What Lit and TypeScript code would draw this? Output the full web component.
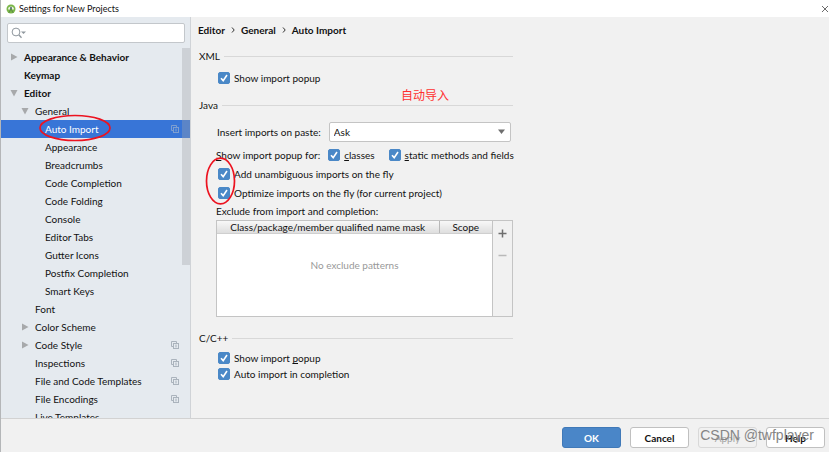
import { LitElement, html, css, svg, nothing } from "lit";
import { customElement, property, state } from "lit/decorators.js";
import { classMap } from "lit/directives/class-map.js";

interface TreeItem {
  label: string;
  level: number;
  arrow?: "open" | "closed";
  copy?: boolean;
}

const ITEMS: TreeItem[] = [
  { label: "Appearance & Behavior", level: 0, arrow: "closed" },
  { label: "Keymap", level: 0 },
  { label: "Editor", level: 0, arrow: "open" },
  { label: "General", level: 1, arrow: "open" },
  { label: "Auto Import", level: 2, copy: true },
  { label: "Appearance", level: 2 },
  { label: "Breadcrumbs", level: 2 },
  { label: "Code Completion", level: 2 },
  { label: "Code Folding", level: 2 },
  { label: "Console", level: 2 },
  { label: "Editor Tabs", level: 2 },
  { label: "Gutter Icons", level: 2 },
  { label: "Postfix Completion", level: 2 },
  { label: "Smart Keys", level: 2 },
  { label: "Font", level: 1 },
  { label: "Color Scheme", level: 1, arrow: "closed" },
  { label: "Code Style", level: 1, arrow: "closed", copy: true },
  { label: "Inspections", level: 1, copy: true },
  { label: "File and Code Templates", level: 1, copy: true },
  { label: "File Encodings", level: 1, copy: true },
  { label: "Live Templates", level: 1 },
];

const base = css`
  * {
    box-sizing: border-box;
  }
  button,
  input,
  select {
    font: inherit;
    color: inherit;
    margin: 0;
  }
`;

@customElement("settings-tree")
export class SettingsTree extends LitElement {
  @state() private selected = "Auto Import";

  static styles = [
    base,
    css`
      :host {
        display: flex;
        flex-direction: column;
        min-height: 0;
        background: #e5eaef;
        border-right: 1px solid #d0d3d7;
      }
      .search {
        display: flex;
        align-items: center;
        gap: 2px;
        height: 20px;
        margin: 6px 5px 5px 6px;
        padding: 0 3px;
        flex: none;
        background: #fff;
        border: 1px solid #c3c7cb;
        border-radius: 2px;
      }
      .search input {
        flex: 1;
        min-width: 0;
        border: 0;
        outline: 0;
        background: none;
      }
      .scroll {
        position: relative;
        flex: 1;
        min-height: 0;
        overflow: hidden;
      }
      .thumb {
        position: absolute;
        top: 0;
        right: 0;
        width: 8px;
        height: 217px;
        background: #a0a4a859;
      }
      ul {
        list-style: none;
        margin: 0;
        padding: 0;
      }
      .row {
        position: relative;
        display: flex;
        align-items: center;
        gap: 4px;
        width: 100%;
        height: 18px;
        padding: 0 11px 0 8px;
        border: 0;
        background: none;
        text-align: left;
      }
      .row.l0 {
        font-weight: 700;
      }
      .row.l1 {
        padding-left: 19px;
      }
      .row.l2 {
        padding-left: 29px;
      }
      .row.sel {
        background: #3875d7;
        color: #fff;
      }
      .arrow {
        width: 11px;
        height: 10px;
        flex: none;
      }
      .label {
        flex: 1;
        white-space: nowrap;
      }
      .copy {
        width: 8px;
        height: 8px;
        color: #aab3bc;
      }
      .sel .copy {
        color: #7f9fd0;
      }
      .ring {
        position: absolute;
        left: 38px;
        top: -6px;
        width: 72px;
        height: 28px;
        z-index: 1;
      }
    `,
  ];

  private arrow(kind?: string) {
    return html`<svg class="arrow" viewBox="0 0 11 10">
      ${kind === "closed"
        ? svg`<path d="M2 1.5V8.5L8.5 5Z" fill="#a7a9ab" />`
        : kind === "open"
          ? svg`<path d="M1.5 2H8.5L5 8.5Z" fill="#a7a9ab" />`
          : nothing}
    </svg>`;
  }

  render() {
    return html`
      <div class="search">
        <svg width="16" height="14" viewBox="0 0 16 14" fill="none" stroke="#8f979e">
          <circle cx="5" cy="6" r="3.9" />
          <path d="M8 9L10.5 11.8" stroke-width="1.3" />
          <path d="M10 5.5H15L12.5 8Z" fill="#8f979e" stroke="none" />
        </svg>
        <input type="text" aria-label="Search settings" />
      </div>
      <div class="scroll">
        <ul>
          ${ITEMS.map((item) => {
            const sel = item.label === this.selected;
            return html`<li>
              <button
                class=${classMap({ row: true, ["l" + item.level]: true, sel })}
                @click=${() => (this.selected = item.label)}
              >
                ${this.arrow(item.arrow)}
                <span class="label">${item.label}</span>
                ${item.copy
                  ? html`<svg class="copy" viewBox="0 0 8 8" fill="none" stroke="currentColor">
                      <path d="M2.5 5.5H.5V.5H5.5V2" />
                      <rect x="2.5" y="2.5" width="5" height="5" />
                      <path d="M4 4.2H6M4 5.8H6" stroke-width=".8" />
                    </svg>`
                  : nothing}
                ${item.label === "Auto Import"
                  ? html`<svg class="ring" viewBox="0 0 72 28" fill="none">
                      <ellipse cx="36" cy="14" rx="35" ry="12.5" stroke="#ec1320" stroke-width="1.7" />
                    </svg>`
                  : nothing}
              </button>
            </li>`;
          })}
        </ul>
        <div class="thumb"></div>
      </div>
    `;
  }
}

@customElement("check-option")
export class CheckOption extends LitElement {
  @property() label = "";
  @property() mnemonic = "";

  static styles = [
    base,
    css`
      :host {
        display: flex;
        align-items: center;
      }
      label {
        display: flex;
        align-items: center;
        gap: 4px;
        white-space: nowrap;
      }
      .box {
        display: grid;
        flex: none;
        width: 12px;
        height: 12px;
      }
      .box > * {
        grid-area: 1 / 1;
      }
      input {
        appearance: none;
        width: 12px;
        height: 12px;
        border: 1px solid #b0b0b0;
        border-radius: 2px;
        background: #fff;
      }
      input:checked {
        background: #4a88c7;
        border-color: #4a88c7;
      }
      svg {
        pointer-events: none;
      }
      u {
        text-underline-offset: 1px;
        text-decoration-skip-ink: none;
      }
    `,
  ];

  render() {
    const i = this.mnemonic ? this.label.lastIndexOf(this.mnemonic) : -1;
    const at = this.mnemonic.length > 1 ? i : this.label.indexOf(this.mnemonic);
    const text =
      i < 0
        ? this.label
        : html`${this.label.slice(0, at)}<u>${this.label[at]}</u>${this.label.slice(at + 1)}`;
    return html`<label>
      <span class="box">
        <input type="checkbox" checked />
        <svg width="12" height="12" viewBox="0 0 12 12" fill="none">
          <path d="M3 6.2L5.2 8.6L9 3" stroke="#fff" stroke-width="1.6" />
        </svg>
      </span>
      <span>${text}</span>
    </label>`;
  }
}

@customElement("auto-import-page")
export class AutoImportPage extends LitElement {
  static styles = [
    base,
    css`
      :host {
        display: block;
        min-width: 0;
        padding: 4px 6px;
        overflow: hidden;
      }
      .crumbs {
        display: flex;
        align-items: center;
        gap: 6px;
        height: 18px;
        margin: 0 0 9px 1px;
        font-weight: 700;
      }
      .crumbs svg {
        width: 4px;
        height: 6px;
      }
      section {
        position: relative;
        width: 314px;
        max-width: 100%;
        margin-left: 2px;
      }
      h2 {
        display: flex;
        align-items: center;
        gap: 4px;
        height: 16px;
        margin: 0;
        font-size: 10px;
        font-weight: 400;
      }
      h2::after {
        content: "";
        flex: 1;
        height: 1px;
        background: #d8d8d8;
      }
      .body {
        padding: 4px 0 10px 19px;
      }
      .body.java {
        padding: 9px 0 13px 17px;
      }
      .body check-option {
        height: 19px;
      }
      .body.tight check-option {
        height: 16px;
      }
      .field {
        display: flex;
        align-items: center;
        gap: 8px;
        height: 20px;
        margin: 0 2px 4px 1px;
        white-space: nowrap;
      }
      .pick {
        position: relative;
        flex: 1;
        display: flex;
        height: 20px;
      }
      .pick select {
        appearance: none;
        width: 100%;
        padding: 0 4px;
        background: #fff;
        border: 1px solid #c4c4c4;
        border-radius: 2px;
      }
      .pick svg {
        position: absolute;
        right: 6px;
        top: 7px;
        pointer-events: none;
      }
      .line {
        display: flex;
        align-items: center;
        gap: 8px;
        height: 18px;
        margin: 0;
        white-space: nowrap;
      }
      .line u {
        text-underline-offset: 1px;
      }
      .line check-option + check-option {
        margin-left: 6px;
      }
      .pair {
        position: relative;
        padding-left: 2px;
      }
      .ring {
        position: absolute;
        left: -11px;
        top: -7px;
        width: 31px;
        height: 48px;
      }
      .list {
        display: flex;
        height: 97px;
        border: 1px solid #c4c4c4;
      }
      .grid {
        flex: 1;
        display: flex;
        flex-direction: column;
        background: #fff;
        border-right: 1px solid #c4c4c4;
      }
      table {
        width: 100%;
        border-collapse: collapse;
      }
      th {
        height: 12px;
        padding: 0;
        line-height: 12px;
        font-weight: 400;
        background: linear-gradient(#f8f8f8, #dedede);
        border-bottom: 1px solid #cfcfcf;
      }
      th + th {
        width: 53px;
        border-left: 1px solid #b8b8b8;
      }
      .empty {
        margin: 24px 0 0;
        line-height: 14px;
        text-align: center;
        color: #999;
      }
      .tools {
        display: flex;
        flex-direction: column;
        align-items: center;
        gap: 10px;
        width: 19px;
        padding-top: 6px;
      }
      .tools button {
        display: grid;
        place-items: center;
        width: 12px;
        height: 12px;
        padding: 0;
        border: 0;
        background: none;
      }
      .note {
        position: absolute;
        left: 202px;
        top: -10px;
        margin: 0;
        font-size: 12px;
        line-height: 18px;
        color: #ff3030;
        z-index: 1;
        white-space: nowrap;
      }
    `,
  ];

  render() {
    const sep = html`<svg viewBox="0 0 4 6" fill="none"><path d="M1 .5L3.2 3L1 5.5" stroke="#333" /></svg>`;
    return html`
      <nav class="crumbs" aria-label="Breadcrumb">
        <span>Editor</span>${sep}<span>General</span>${sep}<span>Auto Import</span>
      </nav>
      <section>
        <h2>XML</h2>
        <div class="body"><check-option label="Show import popup"></check-option></div>
      </section>
      <section>
        <h2>Java</h2>
        <p class="note" lang="zh">自动导入</p>
        <div class="body java">
          <div class="field">
            <label for="paste">Insert imports on paste:</label>
            <span class="pick">
              <select id="paste">
                <option>Ask</option>
                <option>All</option>
                <option>None</option>
              </select>
              <svg width="7" height="6" viewBox="0 0 7 6"><path d="M0 .5H7L3.5 5Z" fill="#6e6e6e" /></svg>
            </span>
          </div>
          <div class="line">
            <span><u>S</u>how import popup for:</span>
            <check-option label="classes" mnemonic="c"></check-option>
            <check-option label="static methods and fields" mnemonic="s"></check-option>
          </div>
          <div class="pair">
            <check-option label="Add unambiguous imports on the fly"></check-option>
            <check-option label="Optimize imports on the fly (for current project)"></check-option>
            <svg class="ring" viewBox="0 0 31 48" fill="none">
              <ellipse cx="15.5" cy="24" rx="14" ry="22.8" stroke="#ec1320" stroke-width="1.7" />
            </svg>
          </div>
          <p class="line">Exclude from import and completion:</p>
          <div class="list">
            <div class="grid">
              <table>
                <thead>
                  <tr>
                    <th>Class/package/member qualified name mask</th>
                    <th>Scope</th>
                  </tr>
                </thead>
              </table>
              <p class="empty">No exclude patterns</p>
            </div>
            <div class="tools">
              <button aria-label="Add">
                <svg width="9" height="9" viewBox="0 0 9 9"><path d="M4.5 .5V8.5M.5 4.5H8.5" stroke="#6e6e6e" stroke-width="1.5" /></svg>
              </button>
              <button aria-label="Remove" disabled>
                <svg width="9" height="9" viewBox="0 0 9 9"><path d="M.5 4.5H8.5" stroke="#b9b9b9" stroke-width="1.5" /></svg>
              </button>
            </div>
          </div>
        </div>
      </section>
      <section>
        <h2>C/C++</h2>
        <div class="body tight">
          <check-option label="Show import popup" mnemonic="popup"></check-option>
          <check-option label="Auto import in completion"></check-option>
        </div>
      </section>
    `;
  }
}

@customElement("app-root")
export class AppRoot extends LitElement {
  static styles = [
    base,
    css`
      :host {
        display: flex;
        flex-direction: column;
        height: 100vh;
        box-sizing: border-box;
        border-left: 1px solid #b4b6b8;
        background: #f1f1f1;
        color: #111;
        font-family: Lato, "Noto Sans CJK SC", sans-serif;
        font-size: 10px;
        line-height: 14px;
        overflow: hidden;
      }
      header {
        display: flex;
        align-items: center;
        gap: 3px;
        height: 17px;
        flex: none;
        padding: 0 0 0 5px;
        background: #fff;
        font-size: 9px;
      }
      header span {
        flex: 1;
      }
      .close {
        display: grid;
        place-items: center;
        width: 8px;
        height: 16px;
        padding: 0;
        border: 0;
        background: none;
      }
      main {
        flex: 1;
        min-height: 0;
        display: grid;
        grid-template-columns: 190px 1fr;
      }
      footer {
        position: relative;
        display: flex;
        justify-content: flex-end;
        gap: 9px;
        flex: none;
        height: 34px;
        padding: 8px 4px 0 0;
        border-top: 1px solid #d2d2d2;
      }
      .btn {
        width: 59px;
        height: 21px;
        padding: 0;
        background: #fff;
        border: 1px solid #c0c0c0;
        border-radius: 3px;
        font-weight: 700;
      }
      .btn.ok {
        background: #4a86c8;
        border-color: #4079b8;
        color: #fff;
      }
      .btn:disabled {
        background: #f1f1f1;
        border-color: #d8d8d8;
        color: #a5a5a5;
        font-weight: 400;
      }
      .mark {
        position: absolute;
        right: 15px;
        top: 6px;
        font-size: 14px;
        line-height: 20px;
        font-family: "Liberation Sans", sans-serif;
        color: #858585;
        pointer-events: none;
      }
    `,
  ];

  render() {
    return html`
      <header>
        <svg width="10" height="10" viewBox="0 0 10 10">
          <circle cx="5" cy="5" r="4.5" fill="#7ab648" />
          <path d="M2 5.5A3 3 0 0 1 8 5.5Z" fill="#e9f3dd" />
          <path d="M5 4.5L3 8.8M5 4.5L7 8.8" stroke="#5d8a4a" />
          <circle cx="5" cy="4" r="1" fill="#4c6670" />
        </svg>
        <span>Settings for New Projects</span>
        <button class="close" aria-label="Close">
          <svg width="8" height="8" viewBox="0 0 8 8"><path d="M1 1L7 7M7 1L1 7" stroke="#6b6b6b" /></svg>
        </button>
      </header>
      <main>
        <settings-tree></settings-tree>
        <auto-import-page></auto-import-page>
      </main>
      <footer>
        <button class="btn ok">OK</button>
        <button class="btn">Cancel</button>
        <button class="btn" disabled>Apply</button>
        <button class="btn">Help</button>
        <span class="mark">CSDN @twfplayer</span>
      </footer>
    `;
  }
}
